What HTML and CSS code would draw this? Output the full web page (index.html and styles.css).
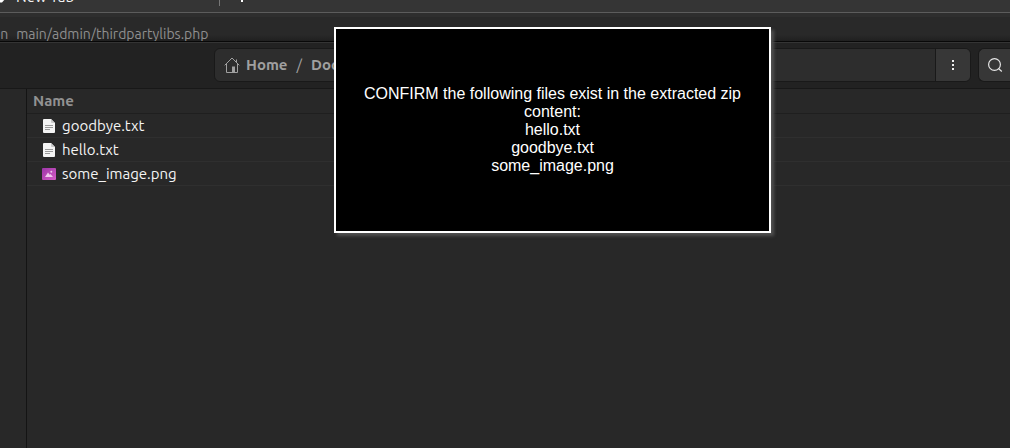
FILE: index.html
```
<!DOCTYPE html>
<html lang="en">
<head>
<meta charset="utf-8">
<title>Files</title>
<link rel="stylesheet" href="styles.css">
</head>
<body>
<div class="screen">
  <div class="tabs">
    <svg class="tab-icon" viewBox="0 0 8 8" aria-hidden="true"><path d="M0 7.5V5L4 1l2 2-4 4.5z" fill="#fff"/></svg>
    <span class="tab-title">New Tab</span>
    <span class="tab-divider"></span>
    <button class="new-tab" type="button" aria-label="Open a new tab"></button>
  </div>
  <div class="address"><span>on</span><span>main/admin/thirdpartylibs.php</span></div>
  <header class="toolbar">
    <nav class="path" aria-label="Location">
      <div class="crumbs">
        <svg class="home" viewBox="0 0 16 16" fill="none" stroke="#a0a0a0" aria-hidden="true"><path d="M.7 8.3 8 1l7.3 7.3M2.5 7v8.5h11V7M12.5 5V2.5"/><path d="M8 9.5h3v6H8z" fill="#a0a0a0" stroke="none"/></svg>
        <a href="#home">Home</a><span class="slash">/</span><a href="#documents">Documents</a>
      </div>
      <button class="menu" type="button" aria-label="Folder menu"><svg viewBox="0 0 16 16" fill="#eee"><path d="M7 3h2v2H7zM7 7h2v2H7zM7 11h2v2H7z"/></svg></button>
    </nav>
    <button class="search" type="button" aria-label="Search"><svg viewBox="0 0 16 16" fill="none" stroke="#e6e6e6" stroke-width="1.2"><circle cx="7.5" cy="7.5" r="5.9"/><path d="m11.5 11.5 3.3 3"/></svg></button>
  </header>
  <div class="content">
    <aside class="sidebar"></aside>
    <main class="files">
      <table>
        <thead><tr><th scope="col">Name</th></tr></thead>
        <tbody>
          <tr><td><div class="file"><svg viewBox="0 0 16 16" aria-hidden="true"><path d="M2 2q0-1 1-1h7l4 4v9q0 1-1 1H3q-1 0-1-1z" fill="#f4f4f4"/><path d="M10 1v3q0 1 1 1h3z" fill="#c8c8c8"/><path d="M4 7.5h8M4 9.5h8M4 11.5h5" stroke="#999"/></svg><span>goodbye.txt</span></div></td></tr>
          <tr><td><div class="file"><svg viewBox="0 0 16 16" aria-hidden="true"><path d="M2 2q0-1 1-1h7l4 4v9q0 1-1 1H3q-1 0-1-1z" fill="#f4f4f4"/><path d="M10 1v3q0 1 1 1h3z" fill="#c8c8c8"/><path d="M4 7.5h8M4 9.5h8M4 11.5h5" stroke="#999"/></svg><span>hello.txt</span></div></td></tr>
          <tr><td><div class="file"><svg viewBox="0 0 16 16" aria-hidden="true"><defs><linearGradient id="photo" x2="1" y2="1"><stop stop-color="#9c35a8"/><stop offset="1" stop-color="#d65cc6"/></linearGradient></defs><rect x="1" y="2" width="14" height="12" rx="1" fill="url(#photo)"/><path d="M4 11 7 6.5l1.7 2.3L9.5 8 12 11z" fill="#f1c9ee"/><circle cx="10.3" cy="5.8" r="1" fill="#f1c9ee"/></svg><span>some_image.png</span></div></td></tr>
        </tbody>
      </table>
    </main>
  </div>
  <section class="notice" role="dialog" aria-label="Confirmation">
    <p>CONFIRM the following files exist in the extracted zip content:<br>hello.txt<br>goodbye.txt<br>some_image.png</p>
  </section>
</div>
</body>
</html>
```
FILE: styles.css
```
* { box-sizing: border-box; }
body {
  margin: 0;
  background: #282828;
  color: #f4f4f4;
  font: 15px/20px "Ubuntu", "Noto Sans", sans-serif;
}
button { margin: 0; padding: 0; color: inherit; font: inherit; }
svg { display: block; width: 16px; height: 16px; flex: none; }
.screen {
  position: relative;
  display: flex;
  flex-direction: column;
  min-height: 100vh;
  overflow: hidden;
}
.tabs {
  display: flex;
  align-items: flex-start;
  height: 13px;
  overflow: hidden;
  background: #353535;
  border-bottom: 1px solid #5c5c5c;
}
.tab-icon { width: 8px; height: 8px; margin-top: -5px; }
.tab-title { width: 211px; margin-top: -13px; padding-left: 8px; }
.tab-divider { width: 1px; height: 6px; background: #777; }
.new-tab { width: 2px; height: 2px; margin-left: 21px; border: 0; background: #fff; }
.address {
  display: flex;
  gap: 8px;
  height: 29px;
  margin-left: -8px;
  padding-top: 11px;
  overflow: hidden;
  background: linear-gradient(#2e2e2e 4px, #292929 4px, #292929 22px, #202020);
  border-bottom: 1px solid #080808;
  color: #8f8f8f;
  font-size: 14px;
}
.toolbar {
  display: flex;
  gap: 7px;
  height: 47px;
  padding: 5px 0 6px 214px;
  background: #222;
  border-top: 1px solid #343434;
  border-bottom: 1px solid #181818;
}
.path {
  display: flex;
  flex: 1;
  min-width: 0;
  border: 1px solid #191919;
  border-radius: 6px;
  background: #2d2d2d;
  overflow: hidden;
}
.crumbs {
  display: flex;
  flex: 1;
  align-items: center;
  min-width: 0;
  padding-left: 9px;
  color: #a0a0a0;
  font-weight: 700;
}
.crumbs a { color: inherit; text-decoration: none; }
.home { margin-right: 6px; }
.slash { padding: 0 9px; font-weight: 400; }
.menu, .search { display: grid; place-items: center; background: #373737; }
.menu { width: 35px; border: 0; border-left: 1px solid #191919; }
.search {
  width: 32px;
  border: 1px solid #191919;
  border-right: 0;
  border-radius: 6px 0 0 6px;
}
.content { display: flex; flex: 1; }
.sidebar { width: 27px; border-right: 1px solid #141414; }
.files { flex: 1; }
table { width: 100%; border-collapse: separate; border-spacing: 0; }
th, td { height: 24px; padding: 0; border-bottom: 1px solid #2f2f2f; line-height: 20px; text-align: left; }
th { height: 25px; padding-left: 6px; border-color: #1f1f1f; color: #929292; }
.file { display: flex; align-items: center; gap: 5px; padding-left: 14px; }
.notice {
  position: absolute;
  top: 27px;
  left: 334px;
  width: 437px;
  padding: 56px 24px;
  border: 2px solid #fff;
  background: #000;
  box-shadow: 3px 3px 3px #505050;
  color: #fff;
  font: 16px/18px "Liberation Sans", Arial, sans-serif;
  text-align: center;
}
.notice p { margin: 0; }
```
